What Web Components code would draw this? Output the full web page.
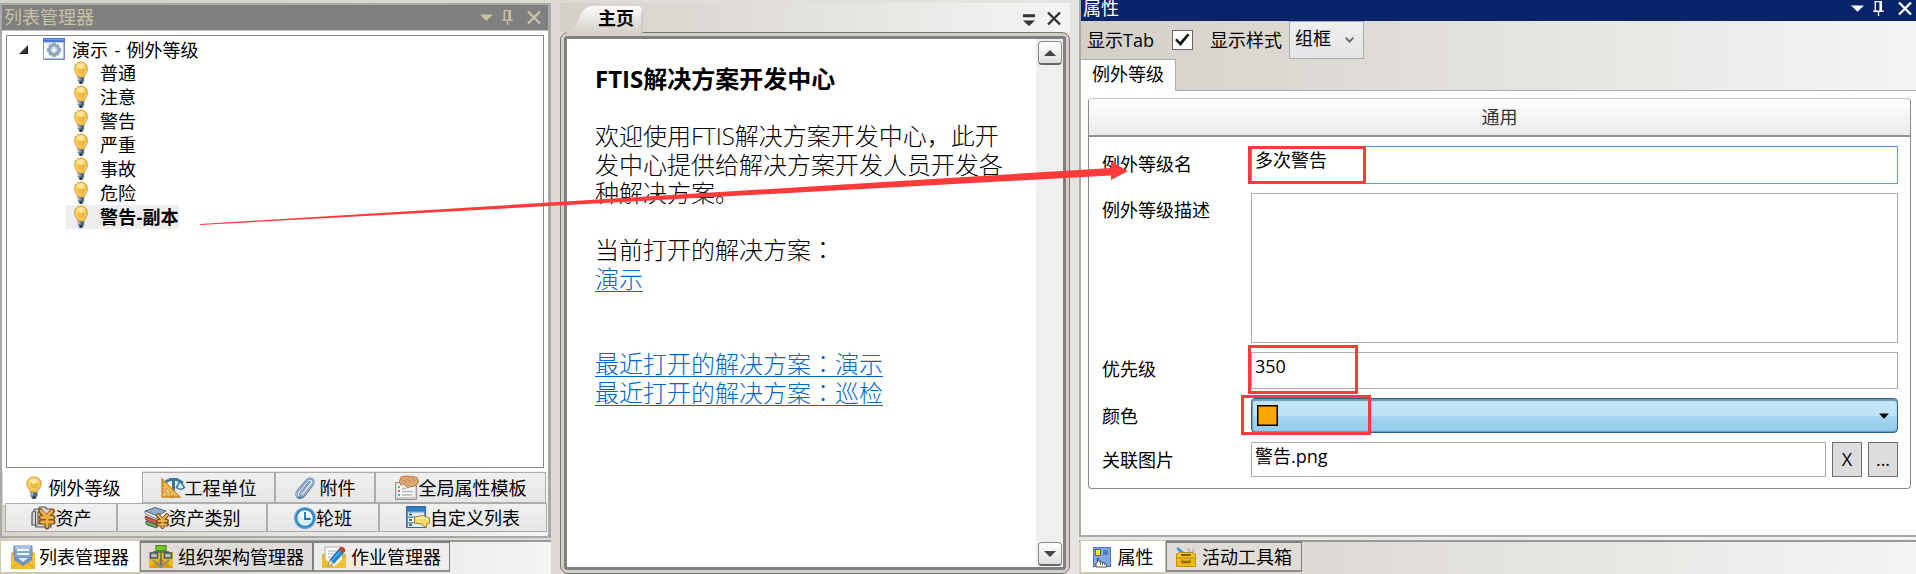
<!DOCTYPE html>
<html lang="zh-CN">
<head>
<meta charset="utf-8">
<title>FTIS</title>
<style>
html,body{margin:0;height:574px;overflow:hidden}
body{font-family:"Open Sans","Noto Sans CJK SC",sans-serif;font-size:18px;color:#000}
</style>
</head>
<body>
<ftis-app></ftis-app>
<script>
const ICONS = {
bulb:['0 0 18 24','<defs><radialGradient id="g" cx=".45" cy=".4" r=".6"><stop offset="0" stop-color="#fff0a8"/><stop offset=".45" stop-color="#fcd862"/><stop offset="1" stop-color="#eeb040"/></radialGradient></defs><path d="M9 1C4.500 1 1.800 4 1.800 7.800c0 4 3.400 5.300 4 9.200h6.400c.6-3.900 4-5.200 4-9.200C16.200 4 13.500 1 9 1z" fill="url(#g)" stroke="#d39a45" stroke-width="1"/><path d="M6 7.500q3 2.500 6 0v3.500q-3 1.500-6 0z" fill="#f5c04a" stroke="#e0a030" stroke-width=".7"/><path d="M4.500 5Q6 2.600 9 2.600T13.500 5Q9 7 4.500 5z" fill="#fff" opacity=".35"/><path d="M5.500 16.500h7v3L10.600 23H7.400L5.500 19.500z" fill="#51687f"/><path d="M5.500 17h3v2.500h-3z" fill="#9bb4c6"/><path d="M8 20h2v3H8z" fill="#2b3d50"/>'],
win:['0 0 23 23','<path d="M.5.5h22v22H.5z" fill="#f4f8fc" stroke="#7e9cc8"/><path d="M0 0h23v4.500H0z" fill="#4474d4"/><path d="M1 1h21v1.300H1z" fill="#6e9bea"/><path d="M1 22h21M22 5v17" stroke="#5e7ca4"/><path d="M10 5.500h3l.5 2 1.800-.9 1.800 1.900-.9 1.800 2.200.6v3l-2.200.6.9 1.800-1.800 1.900-1.800-.9-.5 2h-3l-.5-2-1.900.9-1.700-1.900.9-1.800-2.200-.6v-3l2.200-.6-.9-1.800 1.700-1.900 1.900.9z" fill="#8fa6bf" stroke="#7088a3" stroke-width=".6"/><circle cx="11.500" cy="12.300" r="3.600" fill="#b9cada"/><path d="M11.500 9.800v5M9 12.300h5" stroke="#fff" stroke-width="1.800"/>'],
unit:['0 0 24 20','<path d="M8 1.500h9M12.500 2v14M8 18h9M3 5L8 2M17 2l5 3" stroke="#38799a" stroke-width="3" fill="none"/><path d="M15.500 9.500L19 3l4.500 6.500q-4 3.500-8 0z" fill="#d9edf5" stroke="#38799a" stroke-width="1.600"/><path d="M1 1v18h18z" fill="#f5bd55" stroke="#cf8a20" stroke-width="1.300"/><path d="M5 10v5h5z" fill="#fff3d8" stroke="#cf8a20"/><path d="M1 5h2M1 8h2M1 11h2M1 14h2M6 19v-2M9 19v-2M12 19v-2" stroke="#a96e18"/>'],
clip:['0 0 20 22','<path d="M14.500 5L6 15.500q-1.700 2.500.2 3.500 1.500.8 3.300-1.300L17.800 7.500q2-3.200-.6-5.200-2.800-1.700-5.200.8L3 13.500q-3 4.300-.4 6.500 2.900 2.200 6-.8l6.500-7.800" fill="none" stroke="#577fae" stroke-width="2.200" stroke-linecap="round"/><path d="M14.500 5L6 15.500q-1.700 2.500.2 3.500 1.500.8 3.300-1.300L17.800 7.500q2-3.200-.6-5.200-2.800-1.700-5.200.8L3 13.500q-3 4.300-.4 6.500" fill="none" stroke="#c8dcf2" stroke-width=".8"/>'],
tmpl:['0 0 24 24','<path d="M.7 6.700h20.600v16.600H.7z" fill="#f5f6f6" stroke="#929698" stroke-width="1.300"/><path d="M1.300 22h19.400" stroke="#c9c9c9" stroke-width="2"/><path d="M6 1q6-2 16 .5l1.500 4.500q-2 4-5 4.500l-4 .3q-2 1.800-3 .2L9 8 5.500 9 4.500 5z" fill="#dfa873" stroke="#b57b49"/><path d="M8 4l4 2M12 3l4 2.500M17 2.500L20 5" stroke="#bd8353"/><path d="M3 11h2" stroke="#4c4" stroke-width="2"/><path d="M3 15h2" stroke="#e55" stroke-width="2"/><path d="M3 19h2" stroke="#69e" stroke-width="2"/><path d="M7 12.500h4M7 15.500h11M7 19h10" stroke="#b9b9b9" stroke-width="1.400"/>'],
asset:['0 0 25 23','<path d="M1 7q0-1.500 2-1.500V4q0-1 1.500-1H7l2-2h5l2 2h4v18H5v-2H1z" fill="#d4d4d2" stroke="#555" stroke-width="1.200"/><path d="M4.500 5v15M7 6v13" stroke="#555"/><path d="M9.500 5l4 5M21.500 5l-4.500 5M10 11.500h12M10 16h12M16 10v11" stroke="#7d4d1a" stroke-width="5" stroke-linecap="round"/><path d="M10 5l5 5.500M21 5l-5 5.500M10.500 11.500h11M10.500 16h11M16 11v9.500" stroke="#eeb041" stroke-width="2.800" stroke-linecap="round"/>'],
cat:['0 0 25 22','<path d="M1 4l10-3.500L22 4l-9 5z" fill="#90aec7" stroke="#52687c"/><path d="M1 4q-1 2 1 3l11 5V9z" fill="#f5f5f5" stroke="#66757f"/><path d="M1.500 9q-1 3 1 4l11 5v-4z" fill="#d05d55" stroke="#863832"/><path d="M2 14q-1 3 1 4l10 3v-3z" fill="#73a96e" stroke="#3c6b3c"/><path d="M14 8l3 4M23 8l-3 4M14 14h9M14 17.500h9M18.500 12v8" stroke="#7a481c" stroke-width="4" stroke-linecap="round"/><path d="M14 8l4 4.500M23 8l-4 4.500M14.500 14h8M14.500 17.500h8M18.500 13v7" stroke="#efb54c" stroke-width="2" stroke-linecap="round"/>'],
clock:['0 0 22 22','<circle cx="11" cy="11" r="9.300" fill="#d9effb" stroke="#2d83c4" stroke-width="3"/><circle cx="11" cy="11" r="10.300" fill="none" stroke="#75b9e2" stroke-width=".8"/><path d="M4 9q1-5 7-5t7 5q-7 3-14 0z" fill="#fff" opacity=".7"/><path d="M11 5v7h5.500" fill="none" stroke="#2571aa" stroke-width="1.800"/>'],
list:['0 0 24 23','<path d="M.5.500h19v21H.5z" fill="#5c93c9" stroke="#30699e"/><path d="M1 1h18v4H1z" fill="#347cc0"/><path d="M2 6.500h16v4H2z" fill="#e3f0fb"/><path d="M2 12h16v4H2z" fill="#f3f8fc"/><path d="M2 17.500h16v3.500H2z" fill="#e3edf6"/><path d="M3 8.500h3M3 14h3M3 19h3" stroke="#333" stroke-width="1.500"/><path d="M8.500 11l8-1.500L23.500 12v5l-3 1v4l-5-4-7-1z" fill="#fbd865" stroke="#a38130"/><path d="M10 12.500l7-1 5 1.500" stroke="#fff3b0" fill="none" stroke-width="1.500"/>'],
lists:['0 0 24 24','<path d="M0 8l4-2h16l4 2v16H0z" fill="#efba25"/><path d="M3 1h18v14l-9 6-9-6z" fill="#83a6ca" stroke="#5f83a9"/><path d="M4 1h16v3H4z" fill="#a7c3dd"/><path d="M6 5h12M6 9h12" stroke="#eef6fc" stroke-width="2"/><path d="M0 8l3 3v3l9 7 9-7v-3l3-3v16H0z" fill="#f2bf2d"/><path d="M3 12h18v3l-9 6-9-6z" fill="#6f94bc"/><path d="M7 13h10l-5 4z" fill="#dfeaf4"/><path d="M0 24l8-6M24 24l-8-6" stroke="#d9a31a"/>'],
org:['0 0 24 23','<path d="M0 7h24v16H0z" fill="#efb91e"/><path d="M0 23l12-10 12 10z" fill="#d99c10"/><path d="M12 4v18M5 12V7h14v5" stroke="#65716d" stroke-width="1.800" fill="none"/><path d="M7 .7h10v5H7z" fill="#78c92b" stroke="#4d8c22" stroke-width="1.300"/><path d="M1.500 8h7v5h-7zM15.500 8h7v5h-7z" fill="#b3bec3" stroke="#4a5659" stroke-width="1.500"/><path d="M4 15l8 7 8-7" fill="none" stroke="#8a8d78" stroke-width="2"/>'],
job:['0 0 24 22','<path d="M0 8h24v14H0z" fill="#edb61e"/><path d="M3 1h16l2 14-9 6-9-6z" fill="#f8fafa" stroke="#a8acae"/><path d="M6 5h9M6 8h8M6 11h5" stroke="#aab7be" stroke-width="1.200"/><path d="M0 10l12 11L24 10v12H0z" fill="#f2bf2d"/><path d="M18 2l4.500 3.500L11.500 17.500 6 20l2-6z" fill="#2387cd" stroke="#1a6399"/><path d="M18 1.500q2-1.500 4 .2t1 3.700l-2 1.600-4.500-3.500z" fill="#c2402b"/><path d="M8 14l-2 6 5.500-2.500z" fill="#f6dfb3"/><path d="M19 4.500l-10 11" stroke="#76c4f0"/>'],
prop:['0 0 18 20','<path d="M0 0h18v20H0z" fill="#4775bd"/><path d="M1 1h16v18H1z" fill="#7ea8e6"/><path d="M2.500 2.500h5v6h-5z" fill="#ffea00" stroke="#333" stroke-width=".7"/><path d="M10 3h5v5h-5z" fill="#557eb9"/><path d="M3 20v-4l1.500-1V11.500h1.300V14l2 .7 2 .8 2 .8 1.700 1.200V20z" fill="#fff" stroke="#222" stroke-width=".8"/><path d="M7.500 15v3M9.500 16v2M11.500 16.500V18" stroke="#222" stroke-width=".7"/>'],
tool:['0 0 20 20','<path d="M2 0l8 7-2.500 2L.5 2z" fill="#2a9be0"/><path d="M18.500 1q-3 0-2.500 3l-3 4h3l2-3 2-1-2-.5z" fill="#bcc1c4"/><path d="M12 1l2 5" stroke="#b2b6b8" stroke-width="2"/><path d="M.5 7l4-1.500h11l4 1.500v4H.5z" fill="#f7ca27" stroke="#b48a16"/><path d="M5 7h10v2H5z" fill="#735b17"/><path d="M.5 11h19v8.500H.5z" fill="#f1b916" stroke="#c5900d"/><path d="M6 12.500v3h8v-3M6 14.500h8" fill="none" stroke="#8a6a1a" stroke-width="1.300"/>'],
down:['0 0 14 8','<path d="M0 .5h14L7 7.800z" fill="currentColor"/>'],
pin:['0 0 12 16','<path d="M2.500 11V.700h6.500V11M.3 11h11.400M6 11v5" fill="none" stroke="currentColor" stroke-width="1.500"/><path d="M7 .5h2.300V11H7z" fill="currentColor"/>'],
close:['0 0 14 13','<path d="M1 .5l12 12M13 .5l-12 12" stroke="currentColor" stroke-width="2.300" fill="none"/>'],
menu:['0 0 12 12','<path d="M0 .3h12v3H0zM0 6.500h12l-6 5.500z" fill="currentColor"/>'],
expand:['0 0 9 9','<path d="M9 0v9H0z" fill="#3a3a3a"/><path d="M8.500 1v7.500H1" fill="none" stroke="#111"/>'],
up:['0 0 12 6','<path d="M6 0l6 6H0z" fill="#444"/>'],
check:['0 0 16 14','<path d="M1 7l2-1.500 3 3.500L13.500.500 15.500 2 6.500 13z" fill="#111"/>'],
chev:['0 0 9 6','<path d="M.7.700l3.800 4L8.300.7" fill="none" stroke="#666" stroke-width="1.800"/>']
};
function define(name, html, setup){
  const t=document.createElement('template'); t.innerHTML=html;
  customElements.define(name, class extends HTMLElement{
    constructor(){super();this.attachShadow({mode:'open'}).append(t.content.cloneNode(true));}
    connectedCallback(){if(setup)setup.call(this,this.shadowRoot);}
  });
}
define('ui-icon','<style>:host{display:block;flex:none}svg{display:block;width:100%;height:100%;overflow:visible}</style><svg preserveAspectRatio="none"></svg>',function(r){
  const icon=ICONS[this.getAttribute('name')];
  if(!icon)return;
  const [vb,body]=icon;const s=r.querySelector('svg');s.setAttribute('viewBox',vb);s.innerHTML=body;
  const [w,h]=(this.getAttribute('size')||vb.split(' ').slice(2).join(' ')).split(' ');this.style.width=w+'px';this.style.height=h+'px';
});
define('title-bar',`<style>:host{display:flex;align-items:center;box-sizing:border-box;white-space:nowrap}
.t{flex:1}.b{display:flex;align-items:center}</style><span class="t"><slot></slot></span>
<span class="b"><ui-icon name="down" size="13 7" style="margin-right:9px"></ui-icon><ui-icon name="pin" size="11 15" style="margin-right:14px"></ui-icon><ui-icon name="close" size="14 13"></ui-icon></span>`);
define('tree-row',`<style>:host{display:flex;height:24px;align-items:center;padding-left:59px}
.r{display:flex;align-items:center;height:24px;padding-left:7px}
:host([selected]) .r{background:#eee;font-weight:bold}
span{margin-left:11px;line-height:24px;white-space:nowrap;padding-bottom:1px}
:host([selected]) span{letter-spacing:.2px}</style>
<div class="r"><ui-icon name="bulb" size="16 24"></ui-icon><span><slot></slot></span></div>`);
define('tab-item',`<style>:host{display:flex;align-items:center;justify-content:center;box-sizing:border-box;white-space:nowrap;line-height:24px;
border:1px solid #acacac;background:linear-gradient(#f0f0f0,#e6e6e6)}
:host([selected]){background:#fff;border-color:#fff}
:host([dock]){border:2px solid #808080;border-right-width:1px;border-left-width:1px;border-bottom-color:#8d8d8d;background:#e0ddd8}
:host([dock][selected]){border:1px solid #cfc9ac;border-bottom-width:2px;background:#fff}
:host([light]){background:#eeedeb}
ui-icon{margin-right:var(--g,0)}</style><span><slot></slot></span>`,function(r){
  const n=document.createElement('ui-icon');n.setAttribute('name',this.getAttribute('icon'));r.querySelector('span').before(n);
});
define('list-pane',`<style>
:host{display:grid;grid-template-rows:26px 440px 32px 29px 1fr;box-sizing:border-box;width:551px;height:535px;border:2px solid #a9a9a9;border-right-width:3px;border-bottom:2px solid #a9a9a9;background:linear-gradient(90deg,#d8d4cd,#f4f4f4)}
title-bar{background:#808080;color:#c8c3a4;padding:0 7px 0 2px;border-bottom:1px solid #c4c4c4;line-height:25px}
.w{background:#fff;padding:4px 4px 3px 4px;box-sizing:border-box}
.t{border:1px solid #828790;height:431px}
.root{display:flex;align-items:center;height:25px;padding-left:12px;padding-top:1px;box-sizing:border-box}
.root span{margin-left:7px;white-space:nowrap;word-spacing:1.7px;padding-bottom:1px}
.r{display:grid;align-items:stretch}
.a{grid-template-columns:139px 133px 100px 171px;padding-left:1px;padding-right:2px}
.b{grid-template-columns:112px 150px 112px 168px;padding-left:3px}
.a tab-item{height:31px;margin-top:1px}.a tab-item[selected]{height:34px;margin-top:0}
</style>
<title-bar>列表管理器</title-bar>
<div class="w"><div class="t"><div class="root"><ui-icon name="expand" size="9 9"></ui-icon><ui-icon name="win" size="22 22" style="margin-left:15px"></ui-icon><span>演示 - 例外等级</span></div>
<tree-row>普通</tree-row><tree-row>注意</tree-row><tree-row>警告</tree-row><tree-row>严重</tree-row><tree-row>事故</tree-row><tree-row>危险</tree-row><tree-row selected>警告-副本</tree-row></div></div>
<div class="r a"><tab-item icon="bulb" selected style="--g:6px">例外等级</tab-item><tab-item icon="unit">工程单位</tab-item><tab-item icon="clip" style="--g:5px">附件</tab-item><tab-item icon="tmpl">全局属性模板</tab-item></div>
<div class="r b"><tab-item icon="asset">资产</tab-item><tab-item icon="cat">资产类别</tab-item><tab-item icon="clock">轮班</tab-item><tab-item icon="list">自定义列表</tab-item></div>`);
define('scroll-bar',`<style>:host{display:flex;flex-direction:column;justify-content:space-between;box-sizing:border-box;width:27px;padding:2px 1px 1px 2px;background:#efefef}
div{height:24px;box-sizing:border-box;border:1px solid #8c8c8c;border-bottom:2px solid #666;border-radius:4px;background:linear-gradient(#fff,#dedede);display:grid;place-items:center}</style>
<div><ui-icon name="up"></ui-icon></div><div><ui-icon name="up" style="transform:scaleY(-1)"></ui-icon></div>`);
define('home-doc',`<style>
:host{display:grid;grid-template-rows:29px 542px;width:510px}
.s{display:flex;background:linear-gradient(90deg,#d4d0c8,#f4f4f4)}
.tab{width:82px;position:relative;z-index:1;height:30px}
.tab svg{display:block}
.tab b{position:absolute;left:38px;top:2px;line-height:26px}
.x{margin-left:auto;display:flex;color:#333;padding:9px 9px 0 0;gap:12px}
.f{box-sizing:border-box;border:1px solid #777;border-radius:8px;background:#d4d0c8;padding:3px}
.i{box-sizing:border-box;border:3px solid #808080;border-radius:3px;height:534px;display:flex;background:#fff}
.c{flex:1;padding:26px 0 0 28px;font-size:24px;line-height:28.5px;font-weight:300;white-space:nowrap}
.c b{font-weight:700}
p{margin:0 0 28.5px}a{color:#06c;text-decoration:underline;text-decoration-thickness:1px;text-underline-offset:3px}
i{font-style:normal;font-family:"Open Sans","Noto Sans CJK TC",sans-serif}
</style>
<div class="s"><div class="tab"><svg width="86" height="30"><defs><linearGradient id="t" x2="0" y2="1"><stop offset="0" stop-color="#fcfcfb"/><stop offset="1" stop-color="#d4d0c8"/></linearGradient></defs><path d="M5 30Q14 28 19 15 24 3 32 3H77Q82 3 82 8V30z" fill="url(#t)"/><path d="M82 8V30" stroke="#bbb8b2"/></svg><b>主页</b></div>
<div class="x"><ui-icon name="menu" style="margin-top:2px"></ui-icon><ui-icon name="close"></ui-icon></div></div>
<div class="f"><div class="i"><div class="c"><p><b>FTIS解决方案开发中心</b></p><p>欢迎使用FTIS解决方案开发中心，此开<br>发中心提供给解决方案开发人员开发各<br>种解决方案。</p><p style="margin-bottom:57px">当前打开的解决方案<i lang="zh-TW">：</i><br><a>演示</a></p><p><a>最近打开的解决方案<i lang="zh-TW">：</i>演示</a><br><a>最近打开的解决方案<i lang="zh-TW">：</i>巡检</a></p></div><scroll-bar></scroll-bar></div></div>`);
define('form-row',`<style>:host{display:grid;grid-template-columns:149px 1fr;margin-bottom:9px}
label{line-height:24px;padding-top:var(--lt,6px);white-space:nowrap}
.f{display:flex;gap:6px}</style><label></label><div class="f"><slot></slot></div>`,function(r){r.querySelector('label').textContent=this.getAttribute('label')});
define('text-box',`<style>:host{display:block;flex:1;box-sizing:border-box;border:1px solid #abadb3;background:#fff;padding:1px 3px;line-height:24px}
:host([focused]){border-color:#569de5}</style><slot></slot>`);
define('push-button',`<style>:host{display:block;width:30px;box-sizing:border-box;border:1px solid #707070;background:#ddd;text-align:center;line-height:33px}</style><slot></slot>`);
define('color-combo',`<style>:host{display:flex;flex:1;box-sizing:border-box;height:35px;border:1px solid #2c628b;border-radius:4px;align-items:center;justify-content:space-between;padding:0 8px 0 5px;background:linear-gradient(#c3e5f7 0,#bfe3f6 50%,#a7d8f3 51%,#92c9e8);box-shadow:inset 0 2px 1px #7298b0,inset 0 -1px #5e9cc4,inset 1px 0 1px #7298b0}
.c{width:21px;height:21px;box-sizing:border-box;border:1px solid #000;background:#ffa500;box-shadow:inset 0 0 0 .5px #000}</style><div class="c"></div><ui-icon name="down" size="10 6"></ui-icon>`);
define('prop-pane',`<style>
:host{display:grid;grid-template-rows:21px 38px 32px 1fr;box-sizing:border-box;width:837px;height:537px;border-left:2px solid #a9a9a9;border-bottom:2px solid #a9a9a9;background:linear-gradient(90deg,#d4d0c8,#f4f4f4)}
title-bar{background:#0a246a;color:#fff;padding:0 4px 5px 2px;line-height:16px}
.tb{display:flex;padding-left:6px}
.tb>span{line-height:24px;padding-top:7px}
.cb{width:21px;height:20px;box-sizing:border-box;border:1px solid #666;background:#fff;margin:9px 17px 0 18px;display:grid;place-items:center}
.sel{width:75px;height:38px;box-sizing:border-box;border:1px solid #acacac;background:linear-gradient(#f0f0f0,#e5e5e5);margin-left:7px;display:flex;justify-content:space-between;padding:4px 9px 0 5px;line-height:24px}
.ts{border-bottom:1px solid #acacac;box-sizing:border-box;height:32px}
.ts div{width:95px;height:32px;box-sizing:border-box;background:#fff;border:1px solid #acacac;border-bottom:0;border-left:0;line-height:29px;padding-left:11px}
.c{background:#fff;padding:7px 5px 0 7px}
.g{box-sizing:border-box;border:1px solid #8a8a8a;border-top-color:#c4c4c4;border-radius:4px;height:391px}
.h{height:36px;border-bottom:2px solid #919191;background:linear-gradient(#fff,#ebebeb);text-align:center;line-height:37px;color:#333;border-radius:4px 4px 0 0}
.b{padding:9px 12px 0 13px}
</style>
<title-bar>属性</title-bar>
<div class="tb"><span>显示Tab</span><div class="cb"><ui-icon name="check"></ui-icon></div><span>显示样式</span><div class="sel"><span>组框</span><ui-icon name="chev" style="margin-top:11px"></ui-icon></div></div>
<div class="ts"><div>例外等级</div></div>
<div class="c"><div class="g"><div class="h">通用</div><div class="b">
<form-row label="例外等级名"><text-box focused style="height:38px">多次警告</text-box></form-row>
<form-row label="例外等级描述" style="--lt:5px"><text-box style="height:150px"></text-box></form-row>
<form-row label="优先级" style="--lt:5px"><text-box style="height:37px">350</text-box></form-row>
<form-row label="颜色"><color-combo></color-combo></form-row>
<form-row label="关联图片"><text-box style="height:35px">警告.png</text-box><push-button>X</push-button><push-button>...</push-button></form-row>
</div></div></div>`);
define('dock-tabs',`<style>:host{display:flex;align-items:flex-start;box-sizing:border-box;height:34px;border-top:2px solid #999;background:linear-gradient(90deg,#d4d0c8,#f4f4f4)}
::slotted(tab-item){height:31px;margin-top:-1px}::slotted(tab-item[selected]){height:34px;margin-top:-2px}</style><slot></slot>`);
define('mark-layer',`<style>:host{display:block;position:absolute;left:0;top:0;pointer-events:none}svg{display:block}</style>
<svg width="1916" height="574"><g fill="none" stroke="#ff3a3a" stroke-width="3"><path d="M1249.500 147.500h115v35h-115zM1249.500 346.500h107v46h-107zM1242.500 396.500h127v37h-127z"/></g><path d="M200 224l911-56v-6.500l17 9.500-17 9v-4.500L200 225z" fill="#ff3a3a"/></svg>`);
define('ftis-app',`<style>
:host{display:grid;position:relative;grid-template-columns:551px 9px 510px 9px 837px;width:1916px;height:574px;background:linear-gradient(90deg,#d4d0c8,#f4f4f4)}
:host>div{display:flex;flex-direction:column;justify-content:space-between}
.l,.m{padding-top:3px}
.l dock-tabs,.r dock-tabs{margin-top:auto}
.r{grid-column:5}.m{grid-column:3}
</style>
<div class="l"><list-pane></list-pane><dock-tabs><tab-item dock selected icon="lists" style="width:140px;--g:4px">列表管理器</tab-item><tab-item dock icon="org" style="width:173px;--g:5px">组织架构管理器</tab-item><tab-item dock light icon="job" style="width:137px;--g:5px">作业管理器</tab-item></dock-tabs></div>
<div class="m"><home-doc></home-doc></div>
<div class="r"><prop-pane></prop-pane><dock-tabs><tab-item dock selected icon="prop" style="width:86px;--g:7px;margin-left:1px">属性</tab-item><tab-item dock icon="tool" style="width:136px;--g:6px">活动工具箱</tab-item></dock-tabs></div>
<mark-layer></mark-layer>`);
</script>
</body>
</html>
